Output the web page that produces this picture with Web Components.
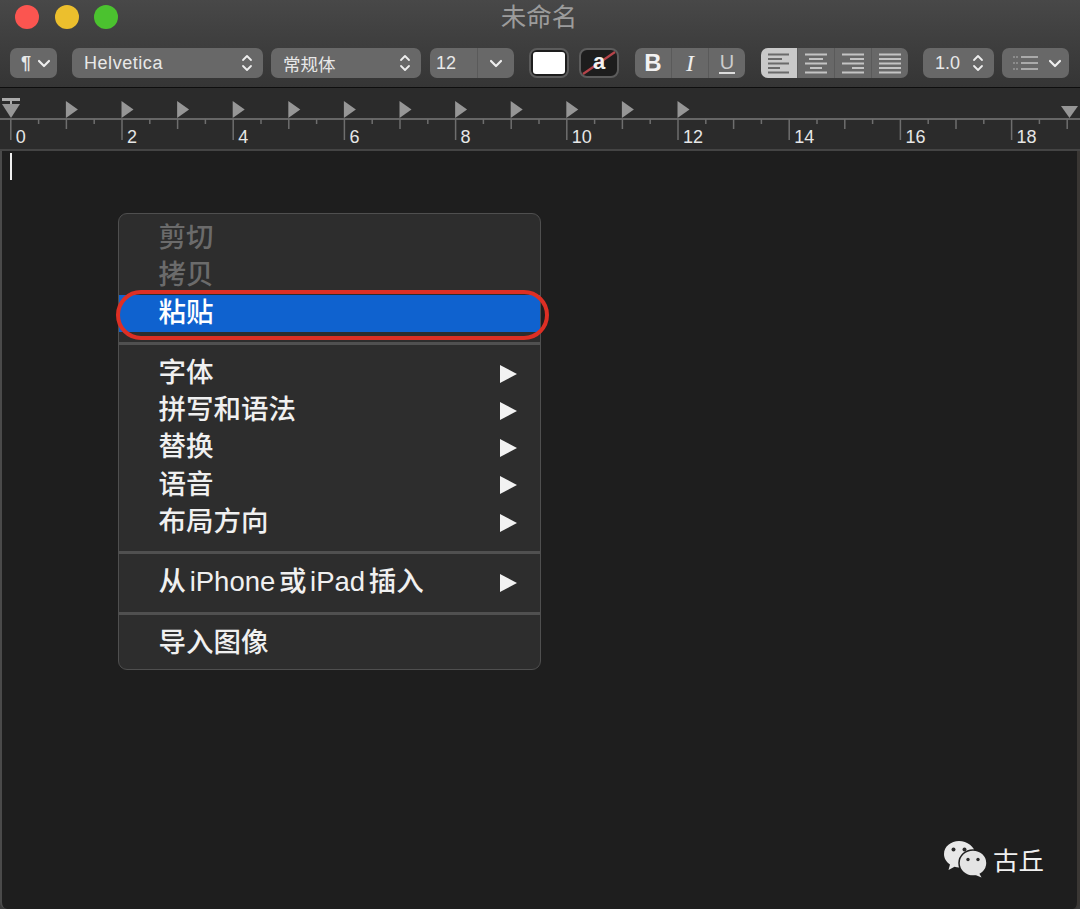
<!DOCTYPE html>
<html lang="zh">
<head>
<meta charset="utf-8">
<title>未命名</title>
<style>
    html, body { margin: 0; height: 100%; background: #3a3a3a; overflow: hidden; }
    body { font-family: "Noto Sans CJK SC", "Liberation Sans", sans-serif; }
</style>
</head>
<body>
<mac-window>
    <window-titlebar slot="head">未命名</window-titlebar>
    <format-toolbar slot="head"></format-toolbar>
    <text-ruler slot="head"></text-ruler>
    <context-menu>
        <menu-item disabled>剪切</menu-item>
        <menu-item disabled>拷贝</menu-item>
        <menu-item active>粘贴</menu-item>
        <menu-sep></menu-sep>
        <menu-item submenu>字体</menu-item>
        <menu-item submenu>拼写和语法</menu-item>
        <menu-item submenu>替换</menu-item>
        <menu-item submenu>语音</menu-item>
        <menu-item submenu>布局方向</menu-item>
        <menu-sep></menu-sep>
        <menu-item submenu>从 iPhone 或 iPad 插入</menu-item>
        <menu-sep></menu-sep>
        <menu-item>导入图像</menu-item>
    </context-menu>
    <wechat-mark>古丘</wechat-mark>
</mac-window>

<script>
const CHEVRON = `<svg width="14" height="9" viewBox="0 0 14 9"><path d="M2 2l5 5 5-5" fill="none" stroke="#eee" stroke-width="2.2" stroke-linecap="round" stroke-linejoin="round"/></svg>`;
const STEPPER = `<svg width="12" height="20" viewBox="0 0 12 20"><path d="M2 7l4-4 4 4M2 13l4 4 4-4" fill="none" stroke="#eee" stroke-width="1.8" stroke-linecap="round" stroke-linejoin="round"/></svg>`;

function alignIcon(rows, color) {
    const lines = rows.map(([x1, x2], i) =>
        `<path d="M${x1} ${2.5 + i * 4.5}H${x2}" stroke="${color}" stroke-width="2"/>`).join('');
    return `<svg width="22" height="22" viewBox="0 0 22 22">${lines}</svg>`;
}

class MacWindow extends HTMLElement {
    constructor() {
        super();
        this.attachShadow({ mode: 'open' });
        this.shadowRoot.innerHTML = `
            <style>
                :host {
                    display: flex;
                    flex-direction: column;
                    width: 1080px;
                    height: 909px;
                    box-sizing: border-box;
                    border-left: 2px solid #4a4a4a;
                    border-right: 3px solid #3a3734;
                    border-radius: 0 0 7px 7px;
                    background: #1e1e1e;
                }
                #head { margin-left: -2px; margin-right: -3px; }
                #doc { position: relative; flex: 1; margin-left: -2px; }
                #caret {
                    position: absolute;
                    left: 10px;
                    top: 2px;
                    width: 2px;
                    height: 27px;
                    background: #f0f0f0;
                }
            </style>
            <div id="head"><slot name="head"></slot></div>
            <div id="doc">
                <div id="caret"></div>
                <slot></slot>
            </div>
        `;
    }
}

class WindowTitlebar extends HTMLElement {
    constructor() {
        super();
        this.attachShadow({ mode: 'open' });
        this.shadowRoot.innerHTML = `
            <style>
                :host {
                    display: grid;
                    grid-template-columns: 1fr auto 1fr;
                    align-items: center;
                    height: 34px;
                    padding: 0 0 0 15px;
                    background: linear-gradient(#484848, #404040);
                    color: #9c9c9c;
                    font: 25.5px/1 "Liberation Sans", "Noto Sans CJK SC", sans-serif;
                }
                #lights { display: flex; gap: 15.500px; }
                i { width: 24px; height: 24px; border-radius: 50%; display: block; }
                #title { margin: 2px 0 0 -17px; }
            </style>
            <div id="lights">
                <i style="background:#fb5550"></i>
                <i style="background:#ecbf2d"></i>
                <i style="background:#4bc22f"></i>
            </div>
            <div id="title"><slot></slot></div>
            <div></div>
        `;
    }
}

class FormatToolbar extends HTMLElement {
    constructor() {
        super();
        this.attachShadow({ mode: 'open' });
        const latin = `'Liberation Sans', 'Noto Sans CJK SC', sans-serif`;
        this.shadowRoot.innerHTML = `
            <style>
                :host {
                    display: flex;
                    align-items: flex-start;
                    box-sizing: border-box;
                    height: 54px;
                    padding: 14px 0 0 10px;
                    background: linear-gradient(#404040, #353535);
                    border-bottom: 1px solid #0e0e0e;
                    color: #e8e8e8;
                    font: 18px ${latin};
                }
                .ctl {
                    display: flex;
                    align-items: center;
                    box-sizing: border-box;
                    height: 30px;
                    border-radius: 7px;
                    background: #686868;
                    flex: none;
                    overflow: hidden;
                }
                .between { justify-content: space-between; padding: 0 10px 0 12px; }
                .seg {
                    display: flex;
                    flex: 1;
                    height: 100%;
                    align-items: center;
                    justify-content: center;
                    border-left: 1px solid #5a5a5a;
                }
                .seg:first-child { border-left: 0; }
                .on { background: #c9c9c9; }
                .swatch {
                    display: flex;
                    align-items: center;
                    justify-content: center;
                    box-sizing: border-box;
                    width: 40px;
                    height: 30px;
                    flex: none;
                    border: 2px solid #5c5c5c;
                    border-radius: 8px;
                    background: #1d1d1d;
                    position: relative;
                }
                .swatch i { display: block; width: 32px; height: 22px; background: #fff; border-radius: 3px; }
                .swatch b { font: bold 22px ${latin}; color: #f2f2f2; margin-top: -3px; position: relative; z-index: 1; }
                .swatch svg { position: absolute; left: -2px; top: -2px; }
            </style>
            <div class="ctl between" style="width:47px;padding:0 6px 0 11px;margin-right:15px"><span style="font-weight:bold">¶</span>${CHEVRON}</div>
            <div class="ctl between" style="width:191px;margin-right:8px;letter-spacing:.55px"><span>Helvetica</span>${STEPPER}</div>
            <div class="ctl between" style="width:150px;margin-right:9px;font-family:'Noto Sans CJK SC',sans-serif;font-size:17.5px"><span>常规体</span>${STEPPER}</div>
            <div class="ctl" style="width:84px;margin-right:15px">
                <div class="seg" style="flex:none;width:47px;justify-content:flex-start;padding-left:6px;box-sizing:border-box">12</div>
                <div class="seg">${CHEVRON}</div>
            </div>
            <div class="swatch" style="margin-right:10px"><i></i></div>
            <div class="swatch" style="margin-right:16px"><b>a</b>
                <svg width="40" height="30" viewBox="0 0 40 30"><path d="M4 26L36 4" stroke="#b5444a" stroke-width="2.2"/></svg>
            </div>
            <div class="ctl" style="width:110px;margin-right:16px">
                <div class="seg" style="font:bold 24px ${latin};color:#f2f2f2">B</div>
                <div class="seg" style="font:italic 24px 'Liberation Serif',serif;color:#eee">I</div>
                <div class="seg" style="font:20px ${latin};color:#ccc"><span style="border-bottom:2px solid #ddd;line-height:20px;padding:0 1px">U</span></div>
            </div>
            <div class="ctl" style="width:147px;margin-right:15px">
                <div class="seg on">${alignIcon([[0, 21], [0, 14], [0, 21], [0, 12], [0, 21]], '#6a6a6a')}</div>
                <div class="seg">${alignIcon([[0, 22], [4, 18], [0, 22], [5, 17], [0, 22]], '#c4c4c4')}</div>
                <div class="seg">${alignIcon([[0, 22], [8, 22], [0, 22], [10, 22], [0, 22]], '#c4c4c4')}</div>
                <div class="seg">${alignIcon([[0, 22], [0, 22], [0, 22], [0, 22], [0, 22]], '#c4c4c4')}</div>
            </div>
            <div class="ctl between" style="width:71px;margin-right:8px;padding:0 10px 0 12px"><span>1.0</span>${STEPPER}</div>
            <div class="ctl between" style="width:67px;padding:0 7px 0 11px">
                <svg width="26" height="18" viewBox="0 0 26 18">
                    <path d="M8 3H25M8 9H25M8 15H25" stroke="#aaa" stroke-width="2"/>
                    <path d="M0 3H5M0 9H5M0 15H5" stroke="#8c8c8c" stroke-width="2" stroke-dasharray="2 1"/>
                </svg>
                ${CHEVRON}
            </div>
        `;
    }
}

class TextRuler extends HTMLElement {
    constructor() {
        super();
        this.attachShadow({ mode: 'open' });
        const unit = 55.6;
        const zero = 10.8;
        let ticks = '';
        let tabs = '';
        let labels = '';
        for (let k = 0; k * unit / 2 + zero < 1080; k++) {
            const x = (zero + k * unit / 2).toFixed(1);
            const len = k % 4 === 0 ? 21 : k % 2 === 0 ? 10 : 5;
            ticks += `<path d="M${x} 31v${len}" stroke="#6e6e6e" stroke-width="1.5"/>`;
            if (k % 4 === 0) {
                labels += `<text x="${+x + 5}" y="55">${k / 2}</text>`;
            }
            if (k % 2 === 0 && k > 0 && k <= 24) {
                tabs += `<path d="M${x - 0.5} 13l12 8.500-12 8.500z"/>`;
            }
        }
        this.shadowRoot.innerHTML = `
            <style>
                :host {
                    display: block;
                    height: 63px;
                    background: #2b2b2b;
                    border-bottom: 2px solid #444;
                    box-sizing: border-box;
                }
                svg { display: block; }
                text { font: 18px "Liberation Sans", sans-serif; fill: #e6e6e6; }
            </style>
            <svg width="1080" height="61" viewBox="0 0 1080 61">
                <rect x="0" y="30" width="1080" height="2" fill="#666"/>
                ${ticks}
                <g fill="#969696">
                    ${tabs}
                    <path d="M2 10h18v3H2z" fill="#aaa"/>
                    <path d="M10 13h2v4h-2z" fill="#aaa"/>
                    <path d="M2 16h18l-9 14z"/>
                    <path d="M1061 18h17l-8.500 12z"/>
                </g>
                ${labels}
            </svg>
        `;
    }
}

class ContextMenu extends HTMLElement {
    constructor() {
        super();
        this.attachShadow({ mode: 'open' });
        this.shadowRoot.innerHTML = `
            <style>
                :host {
                    position: absolute;
                    left: 118px;
                    top: 62px;
                    display: block;
                    box-sizing: border-box;
                    width: 423px;
                    height: 457px;
                    padding: 6px 0;
                    background: #2d2d2d;
                    border: 1px solid #4f4f4f;
                    border-radius: 9px;
                    color: #f0f0f0;
                    font: 500 27.5px "Liberation Sans", "Noto Sans CJK SC", sans-serif;
                    line-height: 37.3px;
                    word-spacing: -4px;
                }
            </style>
            <slot></slot>
        `;
    }
}

class MenuItem extends HTMLElement {
    constructor() {
        super();
        this.attachShadow({ mode: 'open' });
        this.shadowRoot.innerHTML = `
            <style>
                :host {
                    display: flex;
                    align-items: center;
                    justify-content: space-between;
                    position: relative;
                    height: 37.3px;
                    padding: 0 23px 0 39.500px;
                    white-space: nowrap;
                }
                :host([disabled]) { color: #6b6b6b; }
                :host([active]) { background: #0f62cf; color: #fff; }
                span { margin-top: -2px; }
                svg { display: none; }
                :host([submenu]) svg { display: block; }
                #ring {
                    display: none;
                    position: absolute;
                    left: -3px;
                    top: -5px;
                    right: -9px;
                    bottom: -8px;
                    border: 4.500px solid #dd2f24;
                    border-radius: 25px;
                }
                :host([active]) #ring { display: block; }
            </style>
            <span><slot></slot></span>
            <svg width="17" height="18" viewBox="0 0 17 18"><path d="M0 0L17 9 0 18z" fill="#f2f2f2"/></svg>
            <div id="ring"></div>
        `;
    }
}

class MenuSep extends HTMLElement {
    constructor() {
        super();
        this.attachShadow({ mode: 'open' });
        this.shadowRoot.innerHTML = `
            <style>
                :host { display: flex; align-items: center; height: 23px; }
                div { width: 100%; height: 3px; background: #505050; }
            </style>
            <div></div>
        `;
    }
}

class WechatMark extends HTMLElement {
    constructor() {
        super();
        this.attachShadow({ mode: 'open' });
        this.shadowRoot.innerHTML = `
            <style>
                :host {
                    position: absolute;
                    right: 33px;
                    bottom: 31px;
                    display: flex;
                    align-items: center;
                    gap: 6px;
                    color: #f0f0f0;
                    font-size: 25.5px;
                    line-height: 38px;
                }
                svg { display: block; }
                span { margin-top: -1px; }
            </style>
            <svg width="43" height="38" viewBox="0 0 43 38">
                <path d="M15 1C7 1 0 6.500 0 14c0 4.500 2.500 8 6 10.500L4.500 30l6-3.200c1.500.4 3 .6 4.500.6 8 0 16-6 16-13.400S23 1 15 1z" fill="#e8e8e8"/>
                <ellipse cx="29" cy="23" rx="14" ry="13" fill="#e4e4e4" stroke="#1e1e1e" stroke-width="1.500"/>
                <path d="M35 33l2.500 4.500-6-2.500z" fill="#e4e4e4"/>
                <circle cx="9.500" cy="9.500" r="2" fill="#2a2a2a"/>
                <circle cx="20.500" cy="9.500" r="2" fill="#2a2a2a"/>
                <circle cx="24" cy="19.500" r="1.700" fill="#2a2a2a"/>
                <circle cx="34" cy="19.500" r="1.700" fill="#2a2a2a"/>
            </svg>
            <span><slot></slot></span>
        `;
    }
}

customElements.define('mac-window', MacWindow);
customElements.define('window-titlebar', WindowTitlebar);
customElements.define('format-toolbar', FormatToolbar);
customElements.define('text-ruler', TextRuler);
customElements.define('context-menu', ContextMenu);
customElements.define('menu-item', MenuItem);
customElements.define('menu-sep', MenuSep);
customElements.define('wechat-mark', WechatMark);
</script>
</body>
</html>
